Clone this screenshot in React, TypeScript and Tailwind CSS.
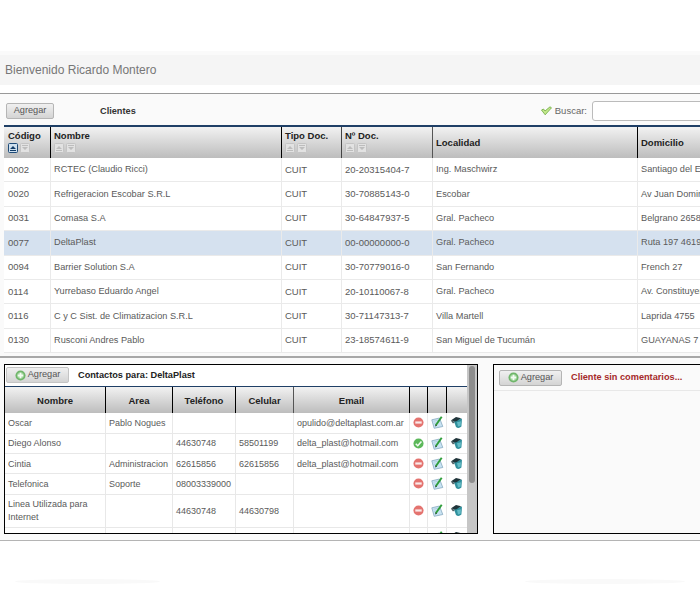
import React from "react";

const clientes = [
  ["0002", "RCTEC (Claudio Ricci)", "CUIT", "20-20315404-7", "Ing. Maschwirz", "Santiago del Estero 1120"],
  ["0020", "Refrigeracion Escobar S.R.L", "CUIT", "30-70885143-0", "Escobar", "Av Juan Domingo Peron"],
  ["0031", "Comasa S.A", "CUIT", "30-64847937-5", "Gral. Pacheco", "Belgrano 2658"],
  ["0077", "DeltaPlast", "CUIT", "00-00000000-0", "Gral. Pacheco", "Ruta 197 4619"],
  ["0094", "Barrier Solution S.A", "CUIT", "30-70779016-0", "San Fernando", "French 27"],
  ["0114", "Yurrebaso Eduardo Angel", "CUIT", "20-10110067-8", "Gral. Pacheco", "Av. Constituyentes"],
  ["0116", "C y C Sist. de Climatizacion S.R.L", "CUIT", "30-71147313-7", "Villa Martell", "Laprida 4755"],
  ["0130", "Rusconi Andres Pablo", "CUIT", "23-18574611-9", "San Miguel de Tucumán", "GUAYANAS 7"],
];

const contactos = [
  { c: ["Oscar", "Pablo Nogues", "", "", "opulido@deltaplast.com.ar"], ok: false, h: "h-[19.4px]" },
  { c: ["Diego Alonso", "", "44630748", "58501199", "delta_plast@hotmail.com"], ok: true, h: "h-[19.4px]" },
  { c: ["Cintia", "Administracion", "62615856", "62615856", "delta_plast@hotmail.com"], ok: false, h: "h-[19.4px]" },
  { c: ["Telefonica", "Soporte", "08003339000", "", ""], ok: false, h: "h-[19.4px]" },
  { c: ["Linea Utilizada para Internet", "", "44630748", "44630798", ""], ok: false, h: "h-[32px]" },
];

const mainCols = "grid grid-cols-[47px_231px_60px_91px_205px_200px]";
const subCols = "grid grid-cols-[101px_67px_63px_58px_116px_18px_19px_19px]";
const headBg = "bg-gradient-to-b from-[#f2f2f2] to-[#bdbdbd]";
const narrowCols = [false, true, false, false, true, true];

function SortBtns({ active }: { active?: boolean }) {
  return (
    <div className="flex gap-[2px] mt-[1px]">
      <svg width="10" height="10" viewBox="0 0 10 10">
        <rect x="0.5" y="0.5" width="9" height="9" rx="1" fill={active ? "#cfe0ee" : "#e2e2e2"} stroke={active ? "#1d4a78" : "#c4c4c4"} />
        <path d="M2 6 L5 3 L8 6 Z M2 7h6v1H2z" fill={active ? "#123c68" : "#bdbdbd"} />
      </svg>
      <svg width="10" height="10" viewBox="0 0 10 10">
        <rect x="0.5" y="0.5" width="9" height="9" rx="1" fill="#e2e2e2" stroke="#c4c4c4" />
        <path d="M2 4 L5 7 L8 4 Z M2 2h6v1H2z" fill="#bdbdbd" />
      </svg>
    </div>
  );
}

function PlusIcon() {
  return (
    <svg width="11" height="11" viewBox="0 0 12 12">
      <circle cx="6" cy="6" r="5.5" fill="#6fb56a" />
      <circle cx="6" cy="6" r="3.6" fill="#9fd59a" />
      <path d="M5 3h2v2h2v2H7v2H5V7H3V5h2z" fill="#f4fbf3" />
    </svg>
  );
}

function MinusIcon() {
  return (
    <svg width="11" height="11" viewBox="0 0 12 12">
      <circle cx="6" cy="6" r="5.5" fill="#e4736f" />
      <path d="M2.5 4.8h7v2.4h-7z" fill="#fbeaea" />
    </svg>
  );
}

function OkIcon() {
  return (
    <svg width="11" height="11" viewBox="0 0 12 12">
      <circle cx="6" cy="6" r="5.5" fill="#5cb85a" />
      <path d="M3 6.2 L5.2 8.4 L9.2 3.8" fill="none" stroke="#f2fbf1" strokeWidth="1.7" />
    </svg>
  );
}

function EditIcon() {
  return (
    <svg width="13" height="13" viewBox="0 0 13 13" className="shrink-0">
      <path d="M0.8 3.8 L8.5 2 L11.8 10.5 L3.2 12.3 Z" fill="#c9e3f3" stroke="#86a9bf" strokeWidth="0.8" />
      <path d="M2.5 5.2 L7 4.2 M3.2 7.4 L6 6.8 M4 9.8 L6 9.4" stroke="#a5c4d6" strokeWidth="0.6" />
      <path d="M4.8 9.3 L10.7 0.8" stroke="#2f9e3a" strokeWidth="1.9" />
      <path d="M4 10.6 L4.7 8.6 L6 9.6 Z" fill="#1c3d20" />
    </svg>
  );
}

function BucketIcon() {
  return (
    <svg width="13" height="13" viewBox="0 0 13 13" className="shrink-0">
      <path d="M3.8 4.8 L12 2.6 L11.4 10.6 Q8.6 13 6 11 Z" fill="#2f8f9c" />
      <path d="M7 6.2 L11 5.2 L10.6 9.8 L8 10.4 Z" fill="#63bcc6" />
      <path d="M0.8 4.6 L6 0.9 L11.2 2.2 L6 5.4 Z" fill="#20343a" />
      <path d="M0.8 4.6 L3 7.6 L5.2 5.8 Z" fill="#48595e" />
    </svg>
  );
}

function TickIcon() {
  return (
    <svg width="11" height="10" viewBox="0 0 11 10">
      <path d="M0.5 4 L2.5 3 L4 5 L9 0.8 L10.5 1.8 L4.2 8.8 Z" fill="#c4e88c" stroke="#6aa83c" strokeWidth="0.8" />
    </svg>
  );
}

function AddButton({ icon, className }: { icon?: boolean; className: string }) {
  return (
    <button className={`flex shrink-0 items-center justify-center gap-[2px] h-[16px] rounded-[2px] border border-[#b5b5b5] bg-gradient-to-b from-[#f0f0f0] to-[#d4d4d4] text-[9.2px] text-[#555] ${className}`}>
      {icon && <PlusIcon />}
      Agregar
    </button>
  );
}

export default function App() {
  return (
    <div className="relative w-[700px] h-[600px] overflow-hidden bg-white font-['Liberation_Sans',Arial,sans-serif] text-[9.5px] text-[#5a5a5a]">
      <div className="h-[51px]" />
      <div className="h-[4px] bg-[#fafafa]" />
      <div className="h-[30px] flex items-center pl-[5px] bg-[#f5f5f5] text-[12px] text-[#777]">
        Bienvenido Ricardo Montero
      </div>
      <div className="h-[8px]" />

      <div className="border-t border-[#999] bg-[#fafafa]">
        <div className="h-[31px] pt-[3px] flex items-center">
          <AddButton className="ml-[6px] w-[48px]" />
          <span className="ml-[46px] pt-[1px] font-bold text-[9.2px] text-[#333]">Clientes</span>
          <div className="ml-auto flex items-center gap-[3px]">
            <TickIcon />
            <span className="pt-[1px] text-[9.5px] text-[#666]">Buscar:</span>
            <div className="ml-[2px] w-[120px] h-[20px] mr-[-12px] rounded-[3px] border border-[#bbb] bg-white" />
          </div>
        </div>

        <div className="ml-[4px] w-[760px]">
          <div className={`${mainCols} h-[33px] border-t-2 border-[#1f3f66] ${headBg} font-bold text-[9.5px] leading-[12px] text-[#222]`}>
            <div className="border-r border-black pl-[4px] pt-[3px]">Código<SortBtns active /></div>
            <div className="border-r border-black pl-[3px] pt-[3px]">Nombre<SortBtns /></div>
            <div className="border-r border-[#444] pl-[3px] pt-[3px]">Tipo Doc.<SortBtns /></div>
            <div className="border-r border-[#555] pl-[3px] pt-[3px]">Nº Doc.<SortBtns /></div>
            <div className="border-r border-black pl-[3px] flex items-center">Localidad</div>
            <div className="pl-[3px] flex items-center">Domicilio</div>
          </div>
          {clientes.map((r) => (
            <div
              key={r[0]}
              className={`${mainCols} h-[24.4px] border-b border-[#eaeaea] ${r[0] === "0077" ? "bg-[#d5e1ef]" : "bg-white"}`}
            >
              {r.map((c, i) => (
                <div
                  key={i}
                  className={`flex items-center whitespace-nowrap overflow-hidden ${narrowCols[i] ? "text-[9.2px] pt-[1px]" : ""} ${i === 0 ? "pl-[4px]" : "pl-[3px]"} ${i < 5 ? "border-r border-[#eaeaea]" : ""}`}
                >
                  {c}
                </div>
              ))}
            </div>
          ))}
        </div>
        <div className="h-[3px]" />
      </div>

      <div className="border-t-2 border-b border-t-[#a8a8a8] border-b-[#b4b4b4] bg-[#fafafa] h-[185px] pt-[6px]">
        <div className="flex items-start">
          <div className="shrink-0 ml-[4px] w-[474px] h-[170px] border border-black bg-white overflow-hidden flex">
            <div className="w-[462px] shrink-0">
              <div className="h-[21px] flex items-center">
                <AddButton icon className="ml-[1px] mb-[1px] w-[63px] border-[#c4c4c4]" />
                <span className="ml-[9px] font-bold text-[9.2px] text-[#222]">Contactos para: DeltaPlast</span>
              </div>
              <div className={`${subCols} h-[27px] border-t border-[#1f3f66] ${headBg} font-bold text-[9.5px] text-[#222]`}>
                <div className="border-r border-black pt-[1px] flex items-center justify-center">Nombre</div>
                <div className="border-r border-black pt-[1px] flex items-center justify-center">Area</div>
                <div className="border-r border-black pt-[1px] flex items-center justify-center">Teléfono</div>
                <div className="border-r border-[#555] pt-[1px] flex items-center justify-center">Celular</div>
                <div className="border-r border-black pt-[1px] flex items-center justify-center">Email</div>
                <div className="border-r border-black" />
                <div className="border-r border-black" />
                <div />
              </div>
              {contactos.map((r, i) => (
                <div key={i} className={`${subCols} ${r.h} border-b border-[#e8e8e8] box-content text-[9px]`}>
                  {r.c.map((c, j) => (
                    <div key={j} className="flex items-center pl-[3px] pr-[2px] pt-[1px] border-r border-[#e8e8e8] leading-[13px]">
                      {c}
                    </div>
                  ))}
                  <div className="flex items-center justify-center border-r border-[#e8e8e8]">
                    {r.ok ? <OkIcon /> : <MinusIcon />}
                  </div>
                  <div className="flex items-center justify-center border-r border-[#e8e8e8]">
                    <EditIcon />
                  </div>
                  <div className="flex items-center justify-center">
                    <BucketIcon />
                  </div>
                </div>
              ))}
              <div className={`${subCols} h-[8px]`}>
                <div className="border-r border-[#e8e8e8]" />
                <div className="border-r border-[#e8e8e8]" />
                <div className="border-r border-[#e8e8e8]" />
                <div className="border-r border-[#e8e8e8]" />
                <div className="border-r border-[#e8e8e8]" />
                <div className="border-r border-[#e8e8e8]" />
                <div className="border-r border-[#e8e8e8] flex justify-center pt-[3px]">
                  <EditIcon />
                </div>
                <div className="flex justify-center pt-[3px]">
                  <BucketIcon />
                </div>
              </div>
            </div>
            <div className="w-[10px] shrink-0 bg-[#c6c6c6] pl-[2px] pt-[1px]">
              <div className="w-[6px] h-[117px] rounded-[3px] bg-[#8d8d8d]" />
            </div>
          </div>

          <div className="shrink-0 ml-[15px] w-[260px] h-[170px] border border-black bg-[#fafafa]">
            <div className="h-[26px] flex items-center border-b border-[#e8e8e8]">
              <AddButton icon className="ml-[5px] w-[63px]" />
              <span className="ml-[9px] pt-[1px] font-bold text-[9.2px] text-[#a52a2a]">Cliente sin comentarios...</span>
            </div>
          </div>
        </div>
      </div>

      <div className="absolute left-[15px] top-[579px] w-[145px] h-[5px] rounded-[50%] bg-[#f9f9f9]" />
      <div className="absolute left-[525px] top-[579px] w-[160px] h-[5px] rounded-[50%] bg-[#f9f9f9]" />
    </div>
  );
}
